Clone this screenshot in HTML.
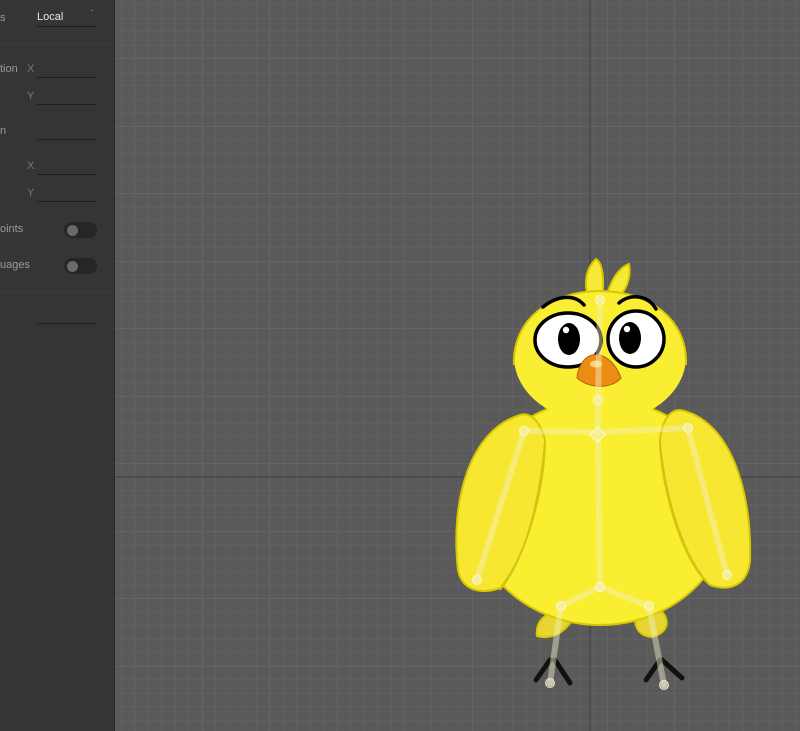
<!DOCTYPE html>
<html><head><meta charset="utf-8"><style>
html,body{margin:0;padding:0;width:800px;height:731px;overflow:hidden;font-family:"Liberation Sans",sans-serif;}
#p{position:absolute;left:0;top:0;width:114px;height:731px;background:#353535;border-right:1px solid #2c2c2c;}
.l{position:absolute;color:#9a9a9a;font-size:11px;}
.u{position:absolute;left:37px;width:60px;border-bottom:1px solid #1f1f1f;}
.t{position:absolute;left:64px;width:33px;height:16px;border-radius:8px;background:#262626;}
.t:after{content:"";position:absolute;left:3px;top:3px;width:11px;height:11px;border-radius:50%;background:#6a6a6a;}
#c{position:absolute;left:115px;top:0;}
</style></head><body>
<svg id="c" width="685" height="731" viewBox="115 0 685 731">
<defs>
<pattern id="g" x="-0.5" y="-9" width="13.5" height="13.5" patternUnits="userSpaceOnUse"><path d="M0 0H13.5M0 0V13.5" stroke="#656565" stroke-width="1" fill="none"/></pattern>
<pattern id="G" x="-0.5" y="-9" width="67.5" height="67.5" patternUnits="userSpaceOnUse"><path d="M0 0H67.5M0 0V67.5" stroke="#6d6d6d" stroke-width="1" fill="none"/></pattern>
</defs>
<rect x="115" y="0" width="685" height="731" fill="#5a5a5a"/>
<rect x="115" y="0" width="685" height="731" fill="url(#g)"/>
<rect x="115" y="0" width="685" height="731" fill="url(#G)"/>
<line x1="115" y1="477" x2="800" y2="477" stroke="#474747" stroke-width="1.5"/>
<line x1="590" y1="0" x2="590" y2="731" stroke="#474747" stroke-width="1.5"/>
<g stroke="#d8c800" stroke-width="2">
<path d="M588 298 C584 282 586 268 596 259 C604 264 604 285 602 298Z M606 298 C610 282 618 268 629 264 C632 280 624 293 616 300Z" fill="#f7ea34"/>
<path d="M562 610 C545 612 535 622 537 636 C552 640 565 632 572 620Z M638 610 C632 622 636 636 652 637 C670 632 670 618 660 610Z" fill="#e6d535"/>
<ellipse cx="600" cy="512" rx="128" ry="113" fill="#faee30"/>
<path d="M520 415 C470 430 450 500 458 570 C462 590 480 595 500 588 C525 560 545 490 545 440 C540 420 530 412 520 415Z" fill="#f7e730"/>
<path d="M680 410 C730 420 752 490 750 560 C748 585 730 592 710 585 C680 560 660 480 660 440 C662 420 670 410 680 410Z" fill="#f7e730"/>
</g>
<ellipse cx="600" cy="357" rx="86" ry="66" fill="#faee32"/>
<path d="M514 365 C512 320 550 291 600 291 C650 291 688 320 686 365" fill="none" stroke="#d8c800" stroke-width="2"/>
<path d="M545 440 C540 500 525 560 500 590 M660 440 C665 500 685 560 710 585" stroke="#d0c020" stroke-width="1.5" fill="none"/>
<g stroke="#000" fill="none" stroke-width="3.5" stroke-linecap="round">
<path d="M543 307 C558 295 575 294 584 305"/><path d="M619 303 C630 293 648 295 656 309"/>
</g>
<ellipse cx="568" cy="340" rx="33" ry="27" fill="#fff" stroke="#000" stroke-width="3.5"/>
<ellipse cx="636" cy="339" rx="28" ry="28" fill="#fff" stroke="#000" stroke-width="3.5"/>
<ellipse cx="569" cy="339" rx="11" ry="16" fill="#000"/><ellipse cx="630" cy="338" rx="11" ry="16" fill="#000"/>
<circle cx="566" cy="330" r="3.2" fill="#fff"/><circle cx="627" cy="329" r="3.2" fill="#fff"/>
<path d="M592 355 C606 352 617 366 621 378 C612 389 590 389 577 378 C578 367 584 357 592 355Z" fill="#ec8c14" stroke="#b5600a" stroke-width="1"/>
<ellipse cx="596" cy="364" rx="6" ry="3.5" fill="#ffd27a"/>
<g stroke="#111" stroke-width="5" stroke-linecap="round" fill="none">
<path d="M550 660 L536 680 M555 660 L570 683"/><path d="M660 660 L646 680 M662 660 L682 678"/>
</g>
<g stroke="#f4f0c8" stroke-opacity="0.45" stroke-width="6" stroke-linecap="round" fill="none">
<path d="M600 300 L598 398 M598 404 L598 432 M592 432 L524 431 M604 432 L688 428 M524 431 L477 580 M688 428 L727 575 M598 440 L600 587 M600 587 L561 606 M600 587 L649 606 M561 606 L550 683 M649 606 L664 685"/>
</g>
<g fill="#f4f0c8" fill-opacity="0.55" stroke="#fffbe0" stroke-opacity="0.8" stroke-width="1">
<circle cx="600" cy="300" r="4.5"/><circle cx="598" cy="400" r="4.5"/><rect x="592" y="429" width="11" height="11" transform="rotate(45 597.5 434.5)"/>
<circle cx="524" cy="431" r="4.5"/><circle cx="688" cy="428" r="4.5"/><circle cx="477" cy="580" r="4.5"/><circle cx="727" cy="575" r="4.5"/>
<circle cx="600" cy="587" r="4.5"/><circle cx="561" cy="606" r="4.5"/><circle cx="649" cy="606" r="4.5"/>
<circle cx="550" cy="683" r="4.5"/><circle cx="664" cy="685" r="4.5"/>
</g>
</svg>
<div id="p">
<div class="l" style="left:0;top:12px">s</div>
<div style="position:absolute;left:37px;top:11px;color:#e8e8e8;font-size:11px">Local</div>
<div style="position:absolute;left:91px;top:9px;color:#999;font-size:8px">&#711;</div>
<div class="u" style="top:26px;border-color:#1c1c1c"></div>
<div style="position:absolute;left:0;top:44px;width:114px;border-top:1px solid #3b3b3b"></div>
<div class="l" style="left:0;top:63px">tion</div><div class="l" style="left:27px;top:63px;color:#777">X</div><div class="u" style="top:77px"></div>
<div class="l" style="left:27px;top:90px;color:#777">Y</div><div class="u" style="top:104px"></div>
<div class="l" style="left:0;top:125px">n</div><div class="u" style="top:139px"></div>
<div class="l" style="left:27px;top:160px;color:#777">X</div><div class="u" style="top:174px"></div>
<div class="l" style="left:27px;top:187px;color:#777">Y</div><div class="u" style="top:201px"></div>
<div class="l" style="left:0;top:223px">oints</div><div class="t" style="top:222px"></div>
<div class="l" style="left:0;top:259px">uages</div><div class="t" style="top:258px"></div>
<div style="position:absolute;left:0;top:292px;width:114px;border-top:1px solid #3b3b3b"></div>
<div class="u" style="top:323px"></div>
</div>
</body></html>
